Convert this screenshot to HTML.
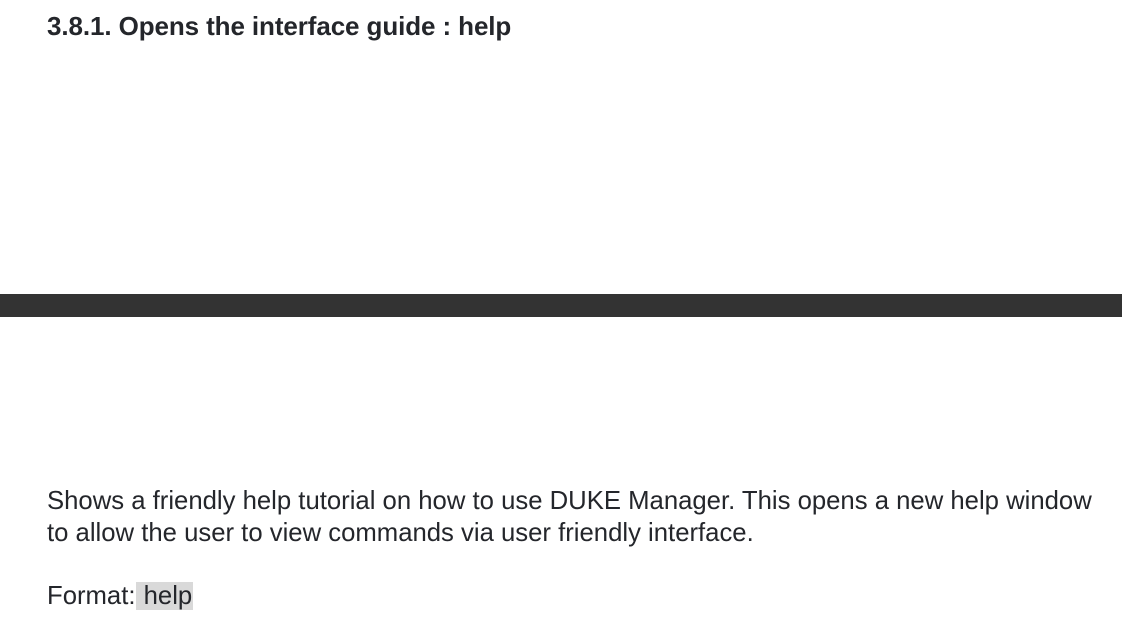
<!DOCTYPE html>
<html><head><style>
body{margin:0;width:1122px;height:622px;background:#fff;position:relative;overflow:hidden;font-family:"Liberation Sans",Arial,sans-serif;color:#24262b}
.h{position:absolute;left:47px;top:10px;font-size:26px;font-weight:bold;line-height:32px;letter-spacing:-0.1px}
.bar{position:absolute;left:0;top:294px;width:1122px;height:23px;background:#333}
.p{position:absolute;left:47px;top:485px;font-size:25.7px;line-height:32px;width:1074px;white-space:nowrap}
.f{position:absolute;left:47px;top:580px;font-size:25.7px;line-height:32px}
code{font-family:inherit;background:#d9d9d9;padding:0 1px}
</style></head><body>
<div class="h">3.8.1. Opens the interface guide : help</div>
<div class="bar"></div>
<div class="p">Shows a friendly help tutorial on how to use DUKE Manager. This opens a new help window<br>to allow the user to view commands via user friendly interface.</div>
<div class="f">Format:<code> help</code></div>
</body></html>
